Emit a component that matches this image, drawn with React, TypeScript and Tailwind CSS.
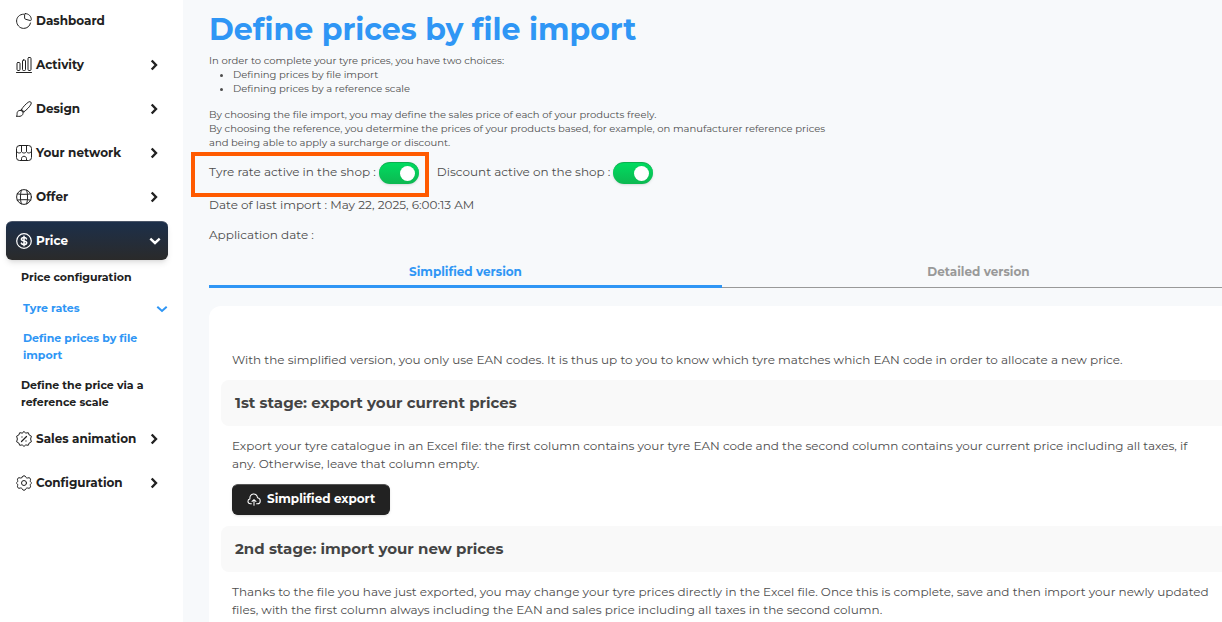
import type { ReactNode } from "react";
import { clsx } from "clsx";

const Icon = ({ children, size = 16 }: { children: ReactNode; size?: number }) => (
  <svg
    width={size}
    height={size}
    viewBox="0 0 16 16"
    fill="none"
    stroke="currentColor"
    strokeWidth="1"
    strokeLinecap="round"
    strokeLinejoin="round"
    className="shrink-0"
    aria-hidden="true"
  >
    {children}
  </svg>
);

const DashboardIcon = () => (
  <Icon>
    <path d="M7.500 1.200C3.500 1.200.6 4.300.6 8s3 7.400 7 7.400c3.600 0 6.300-2.300 6.900-5.400" />
    <path d="M9.300.6c3.300 0 6 2.600 6 6 0 .7-.4 1.100-1.100.9L9.700 6.300C9 6.100 8.600 5.700 8.600 5V1.400c0-.5.2-.8.7-.8z" />
  </Icon>
);

const ActivityIcon = () => (
  <Icon>
    <path d="M.5 15.500h15" />
    <rect x="1" y="5.500" width="3" height="8" rx="1" />
    <rect x="6.500" y="3" width="3" height="10.500" rx="1" />
    <rect x="12" y=".5" width="3" height="13" rx="1" />
  </Icon>
);

const DesignIcon = () => (
  <Icon>
    <path d="M5.300 8.600C7.500 5.400 10 2.600 12.800.9c1.500-.8 3 .5 2.300 2.100-1.500 2.900-4.200 5.700-7.300 7.900z" />
    <path d="M5.300 8.600c1.300.300 2.200 1.100 2.500 2.300" />
    <path d="M.6 15.200c.8-.9.300-2.300.6-3.600.4-1.700 2.300-2.700 4-2 1.600.7 2.300 2.600 1.400 4.100-1.100 1.900-3.700 1.900-6 1.500z" />
  </Icon>
);

const NetworkIcon = () => (
  <Icon>
    <rect x=".5" y=".5" width="15" height="15" rx="3" />
    <path d="M5.500.5v5.700M10.500.5v5.700" />
    <path d="M.6 6.500c.8 2 4.200 2 4.900 0 .9 2 4.100 2 5 0 .7 2 4.100 2 4.900 0" />
    <path d="M5.500 15.500v-1.800c0-3.200 5-3.200 5 0v1.800" />
  </Icon>
);

const OfferIcon = () => (
  <Icon>
    <circle cx="8" cy="8" r="7.400" />
    <path d="M5.300 1.200c-1.200 4.300-1.200 9.300 0 13.600M10.700 1.200c1.200 4.300 1.200 9.300 0 13.600" />
    <path d="M1.200 4.900c4.300.6 9.300.6 13.600 0M1.200 11.100c4.300-.6 9.300-.6 13.600 0" />
  </Icon>
);

const PriceIcon = () => (
  <Icon>
    <circle cx="8" cy="8" r="7.300" strokeWidth="1.200" />
    <path
      strokeWidth="1.500"
      d="M10.500 5.900C10.200 4.900 9.200 4.500 8 4.500c-1.500 0-2.600.7-2.600 1.800C5.400 8.700 10.700 7.400 10.700 9.800c0 1.100-1.200 1.800-2.700 1.800-1.300 0-2.300-.5-2.700-1.500M8 3.200v9.600"
    />
  </Icon>
);

const SalesIcon = () => (
  <Icon>
    <path d="M8 .6l1.800 1.500 2.500-.4.900 2.300 2.200 1.200L14.600 8l.8 2.800-2.200 1.200-.9 2.300-2.500-.4L8 15.400l-1.800-1.500-2.500.4-.9-2.300L.6 10.800 1.400 8 .6 5.200 2.800 4l.9-2.300 2.500.4z" />
    <path d="M5.500 10.500l5-5M6 5.900v.2M10 9.900v.2" strokeWidth="1.200" />
  </Icon>
);

const ConfigurationIcon = () => (
  <Icon>
    <circle cx="8" cy="8" r="2.500" />
    <path d="M6.200 2C6.800.3 9.200.3 9.800 2c.3.900 1.200 1.300 2.100.9 1.700-.8 3.200.9 2.500 2.400-.4.900 0 1.700.7 2.100.6.300.6.900 0 1.200-.7.400-1.100 1.200-.7 2.100.7 1.500-.8 3.200-2.500 2.400-.9-.4-1.800 0-2.100.9-.6 1.700-3 1.700-3.600 0-.3-.9-1.200-1.300-2.100-.9-1.700.8-3.200-.9-2.500-2.400.4-.9 0-1.700-.7-2.100-.6-.3-.6-.9 0-1.200.7-.4 1.100-1.200.7-2.100-.7-1.500.8-3.200 2.500-2.400.9.400 1.800 0 2.100-.9z" />
  </Icon>
);

const CloudUploadIcon = () => (
  <Icon size={14}>
    <path
      strokeWidth="1.200"
      d="M5 13.500H4C.300 13.300.200 8.500 3.400 8 2.200 1.200 11.500.200 12 6.500c4.200.6 4.200 6.800 0 7h-1M8 15V9M5.800 10.800 8 8.800l2.200 2"
    />
  </Icon>
);

const Chevron = ({ down = false, thin = false }: { down?: boolean; thin?: boolean }) => (
  <svg
    width="12"
    height="12"
    viewBox="0 0 12 12"
    fill="none"
    stroke="currentColor"
    strokeWidth={thin ? 2 : 2.4}
    className="shrink-0"
    aria-hidden="true"
  >
    <path d={down ? "M1.300 3.700 6 8l4.700-4.300" : "M3.700 1.500 8 6l-4.300 4.500"} />
  </svg>
);

type NavItem = { label: string; icon: ReactNode; arrow?: boolean };

const topItems: NavItem[] = [
  { label: "Dashboard", icon: <DashboardIcon /> },
  { label: "Activity", icon: <ActivityIcon />, arrow: true },
  { label: "Design", icon: <DesignIcon />, arrow: true },
  { label: "Your network", icon: <NetworkIcon />, arrow: true },
  { label: "Offer", icon: <OfferIcon />, arrow: true },
];

const bottomItems: NavItem[] = [
  { label: "Sales animation", icon: <SalesIcon />, arrow: true },
  { label: "Configuration", icon: <ConfigurationIcon />, arrow: true },
];

const NavLink = ({ label, icon, arrow }: NavItem) => (
  <a href="#" className="flex h-11 items-center gap-1 pr-[23px] pl-4">
    {icon}
    <span className="flex-1">{label}</span>
    {arrow && <Chevron />}
  </a>
);

const Sidebar = () => (
  <nav className="-mt-px w-[183px] shrink-0 bg-white text-[12px] font-bold text-[#212121]">
    {topItems.map((item) => (
      <NavLink key={item.label} {...item} />
    ))}
    <a
      href="#"
      className="mt-[2px] mr-[15px] ml-[6px] flex h-[39px] items-center gap-1 rounded-md border-t border-[#4a5568] bg-linear-to-b from-[#1c2f4a] to-[#2a2a2a] pr-[7px] pl-[10px] text-white shadow-md"
    >
      <PriceIcon />
      <span className="flex-1">Price</span>
      <Chevron down />
    </a>
    <div className="flex flex-col gap-[13px] pt-[9px] pb-[6px] pl-[21px] text-[11px] leading-[17px]">
      <a href="#">Price configuration</a>
      <a href="#" className="flex items-center justify-between pt-px pr-[15px] pl-[2px] text-[#2f96f5]">
        Tyre rates
        <Chevron down thin />
      </a>
      <a href="#" className="pr-8 pl-[2px] text-[#2f96f5]">
        Define prices by file import
      </a>
      <a href="#" className="pr-8">
        Define the price via a reference scale
      </a>
    </div>
    {bottomItems.map((item) => (
      <NavLink key={item.label} {...item} />
    ))}
  </nav>
);

const Toggle = ({ id, label }: { id: string; label: string }) => (
  <div className="flex h-[22px] items-center gap-[3px]">
    <label htmlFor={id} className="pb-[2px]">
      {label}
    </label>
    <input
      id={id}
      type="checkbox"
      role="switch"
      defaultChecked
      className="flex h-[22px] w-10 cursor-pointer appearance-none items-center rounded-full border-t border-[#0bb04e] bg-gray-300 pl-1 shadow-sm before:size-[15px] before:rounded-full before:bg-white checked:justify-end checked:bg-linear-to-b checked:from-[#00db60] checked:to-[#0cb851] checked:pr-1"
    />
  </div>
);

const StageTitle = ({ children }: { children: ReactNode }) => (
  <h2 className="ml-3 rounded-lg bg-[#f9f9f9] px-[14px] py-[11px] text-[15px] leading-6 font-bold text-[#444]">
    {children}
  </h2>
);

const Tab = ({ label, active = false }: { label: string; active?: boolean }) => (
  <button
    type="button"
    role="tab"
    aria-selected={active}
    className={clsx(
      "flex h-8 flex-1 cursor-pointer items-start justify-center pt-[7px] font-bold",
      active ? "border-b-3 border-[#2f96f5] text-[#2f96f5]" : "border-b border-[#999] text-[#999]"
    )}
  >
    {label}
  </button>
);

const App = () => {
  return (
    <div className="flex h-screen overflow-hidden bg-[#f7f9fb] font-['Montserrat','Inter',sans-serif] text-[12px] text-[#4d4d4d]">
      <Sidebar />
      <main className="-mr-[13px] min-w-0 flex-1 pl-[26px]">
        <h1 className="pt-[10px] text-[30px] leading-10 font-bold text-[#2f96f5]">
          Define prices by file import
        </h1>
        <div className="pt-1 text-[10px] leading-[14px]">
          <p>In order to complete your tyre prices, you have two choices:</p>
          <ul className="list-disc pl-6">
            <li>Defining prices by file import</li>
            <li>Defining prices by a reference scale</li>
          </ul>
          <p className="pt-3">
            By choosing the file import, you may define the sales price of each of your products freely.
            <br />
            By choosing the reference, you determine the prices of your products based, for example, on manufacturer reference prices
            <br />
            and being able to apply a surcharge or discount.
          </p>
        </div>

        <div className="flex gap-[18px] pt-3">
          <div className="relative">
            <Toggle id="rate" label="Tyre rate active in the shop :" />
            <span className="pointer-events-none absolute -top-[10px] -right-[10px] -bottom-[13px] -left-[18px] border-4 border-[#ff5a00]" />
          </div>
          <Toggle id="discount" label="Discount active on the shop :" />
        </div>
        <p className="pt-[11px] leading-5">Date of last import : May 22, 2025, 6:00:13 AM</p>
        <p className="pt-[10px] leading-5">Application date :</p>

        <div role="tablist" className="mt-[11px] flex leading-[18px]">
          <Tab label="Simplified version" active />
          <Tab label="Detailed version" />
        </div>

        <section className="mt-[18px] h-full rounded-xl bg-white pt-[45px] leading-[18px]">
          <p className="px-[23px] pb-[11px]">
            With the simplified version, you only use EAN codes. It is thus up to you to know which tyre matches which EAN code in order to allocate a new price.
          </p>
          <StageTitle>1st stage: export your current prices</StageTitle>
          <p className="px-[23px] pt-[11px]">
            Export your tyre catalogue in an Excel file: the first column contains your tyre EAN code and the second column contains your current price including all taxes, if
            <br />
            any. Otherwise, leave that column empty.
          </p>
          <button
            type="button"
            className="my-[11px] ml-[23px] flex h-[31px] cursor-pointer items-center gap-[6px] rounded-md border border-[#222] border-t-[#555] bg-[#222] px-[14px] pb-[2px] font-bold text-white shadow-sm"
          >
            <CloudUploadIcon />
            Simplified export
          </button>
          <StageTitle>2nd stage: import your new prices</StageTitle>
          <p className="px-[23px] pt-[11px]">
            Thanks to the file you have just exported, you may change your tyre prices directly in the Excel file. Once this is complete, save and then import your newly updated
            <br />
            files, with the first column always including the EAN and sales price including all taxes in the second column.
          </p>
        </section>
      </main>
    </div>
  );
};

export default App;
